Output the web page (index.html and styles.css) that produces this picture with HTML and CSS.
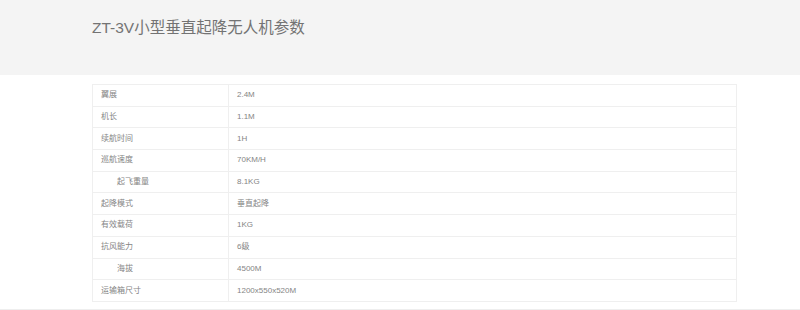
FILE: index.html
```html
<!DOCTYPE html>
<html lang="zh">
<head>
<meta charset="utf-8">
<link rel="stylesheet" href="styles.css">
</head>
<body>
<header class="banner">
  <h1 class="title">ZT-3V小型垂直起降无人机参数</h1>
</header>
<main class="content">
  <table class="spec">
    <colgroup><col class="kc"><col class="vc"></colgroup>
    <tr><td class="k">翼展</td><td class="v">2.4M</td></tr>
    <tr><td class="k">机长</td><td class="v">1.1M</td></tr>
    <tr><td class="k">续航时间</td><td class="v">1H</td></tr>
    <tr><td class="k">巡航速度</td><td class="v">70KM/H</td></tr>
    <tr><td class="k indent">起飞重量</td><td class="v">8.1KG</td></tr>
    <tr><td class="k">起降模式</td><td class="v">垂直起降</td></tr>
    <tr><td class="k">有效载荷</td><td class="v">1KG</td></tr>
    <tr><td class="k">抗风能力</td><td class="v">6级</td></tr>
    <tr><td class="k indent">海拔</td><td class="v">4500M</td></tr>
    <tr><td class="k">运输箱尺寸</td><td class="v">1200x550x520M</td></tr>
  </table>
</main>
<div class="footer-line"></div>
</body>
</html>
```
FILE: styles.css
```css
html, body {
  margin: 0;
  padding: 0;
  background: #fff;
  font-family: "Liberation Sans", Arial, "Noto Sans CJK SC", sans-serif;
}
.banner {
  background: #f4f4f4;
  height: 75px;
  box-sizing: border-box;
  padding: 18px 0 0 92px;
}
.title {
  margin: 0;
  font-size: 15.5px;
  line-height: 20px;
  font-weight: normal;
  color: #737373;
}
.content {
  padding: 9px 0 0 92px;
  height: 225px;
}
.spec {
  width: 645px;
  table-layout: fixed;
  border-collapse: collapse;
  border: 1px solid #eeeeee;
  font-size: 8px;
  color: #858585;
}
.spec .kc {
  width: 136px;
}
.spec td {
  height: 20.7px;
  padding: 0 8px;
  border: 1px solid #efefef;
  vertical-align: middle;
  line-height: 10px;
}
.spec .indent {
  padding-left: 24px;
}
.footer-line {
  border-top: 1px solid #eeeeee;
}
```
